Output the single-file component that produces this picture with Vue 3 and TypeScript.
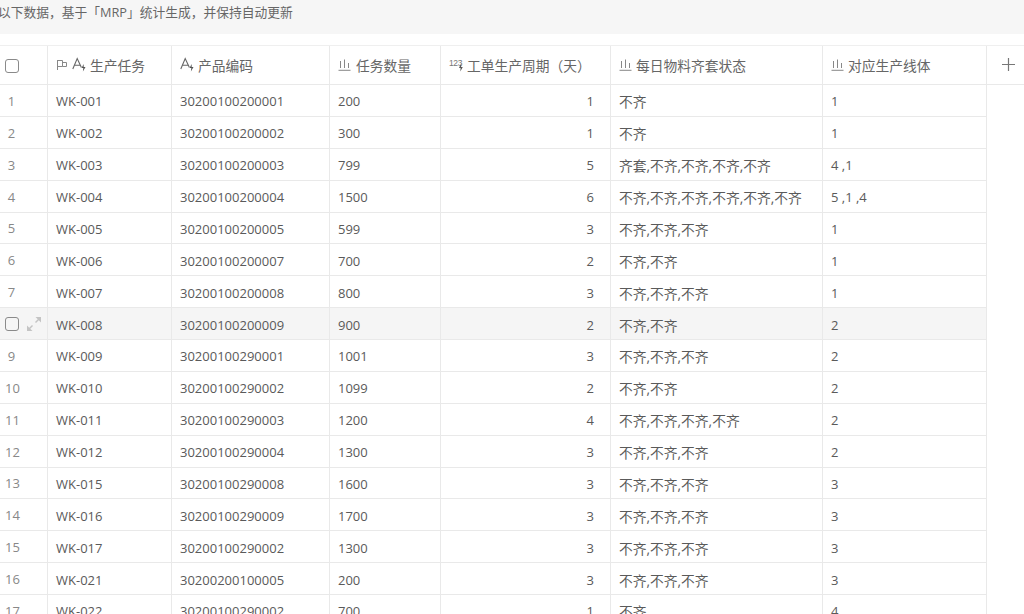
<script setup lang="ts">
type Row = {
  no: number;
  task: string;
  code: string;
  qty: string;
  days: number;
  status: string;
  line: string;
};

const raw: [string, string, string, number, string, string][] = [
  ["WK-001", "30200100200001", "200", 1, "不齐", "1"],
  ["WK-002", "30200100200002", "300", 1, "不齐", "1"],
  ["WK-003", "30200100200003", "799", 5, "齐套,不齐,不齐,不齐,不齐", "4 ,1"],
  ["WK-004", "30200100200004", "1500", 6, "不齐,不齐,不齐,不齐,不齐,不齐", "5 ,1 ,4"],
  ["WK-005", "30200100200005", "599", 3, "不齐,不齐,不齐", "1"],
  ["WK-006", "30200100200007", "700", 2, "不齐,不齐", "1"],
  ["WK-007", "30200100200008", "800", 3, "不齐,不齐,不齐", "1"],
  ["WK-008", "30200100200009", "900", 2, "不齐,不齐", "2"],
  ["WK-009", "30200100290001", "1001", 3, "不齐,不齐,不齐", "2"],
  ["WK-010", "30200100290002", "1099", 2, "不齐,不齐", "2"],
  ["WK-011", "30200100290003", "1200", 4, "不齐,不齐,不齐,不齐", "2"],
  ["WK-012", "30200100290004", "1300", 3, "不齐,不齐,不齐", "2"],
  ["WK-015", "30200100290008", "1600", 3, "不齐,不齐,不齐", "3"],
  ["WK-016", "30200100290009", "1700", 3, "不齐,不齐,不齐", "3"],
  ["WK-017", "30200100290002", "1300", 3, "不齐,不齐,不齐", "3"],
  ["WK-021", "30200200100005", "200", 3, "不齐,不齐,不齐", "3"],
  ["WK-022", "30200100290002", "700", 1, "不齐", "4"],
];

const rows: Row[] = raw.map((r, i) => ({
  no: i + 1,
  task: r[0],
  code: r[1],
  qty: r[2],
  days: r[3],
  status: r[4],
  line: r[5],
}));

const hoverNo = 8;
</script>

<template>
  <div class="page">
    <div class="notice"><span class="notice__text">以下数据，基于「MRP」统计生成，并保持自动更新</span></div>

    <div class="sheet">
      <div class="row row--head">
        <div class="cell cell--check"><span class="box"></span></div>
        <div class="cell">
          <svg class="ic" width="12" height="12" viewBox="0 0 12 12" fill="none" stroke="#888" stroke-width="1">
            <path d="M1.500 1v10M1.500 1.500h5v6h-5M6.500 3.500h4v4h-4" />
          </svg>
          <svg class="ic ic--text" width="15" height="15" viewBox="0 0 15 15" fill="none" stroke="#666" stroke-width="1.100">
            <path d="M.8 12 5.200 1.500 9.400 10.500M2.300 8.200h5.600" />
            <path d="M11.600 7 9.600 11h1.700l-.4 3.500 2.600-4.500h-1.800z" fill="#555" stroke="none" />
          </svg>
          <span>生产任务</span>
        </div>
        <div class="cell">
          <svg class="ic ic--text" width="15" height="15" viewBox="0 0 15 15" fill="none" stroke="#666" stroke-width="1.100">
            <path d="M.8 12 5.200 1.500 9.400 10.500M2.300 8.200h5.600" />
            <path d="M11.600 7 9.600 11h1.700l-.4 3.500 2.600-4.500h-1.800z" fill="#555" stroke="none" />
          </svg>
          <span>产品编码</span>
        </div>
        <div class="cell cell--bars">
          <svg class="ic" width="13" height="12" viewBox="0 0 13 12" fill="none" stroke="#888" stroke-width="1">
            <path d="M.5 11.300h12M2.500 2v7M6.500 .5v8.500M10.500 4v5" />
          </svg>
          <span>任务数量</span>
        </div>
        <div class="cell cell--count">
          <svg class="ic" width="15" height="15" viewBox="0 0 15 15" fill="none">
            <text x="0" y="9" font-size="8.500" letter-spacing="-0.4" fill="#777" font-family="Liberation Sans, sans-serif">123</text>
            <path d="M12.300 6 10 11h1.600l-.3 3.500 2.500-4.500h-1.700z" fill="#555" />
          </svg>
          <span>工单生产周期（天）</span>
        </div>
        <div class="cell">
          <svg class="ic" width="13" height="12" viewBox="0 0 13 12" fill="none" stroke="#888" stroke-width="1">
            <path d="M.5 11.300h12M2.500 2v7M6.500 .5v8.500M10.500 4v5" />
          </svg>
          <span>每日物料齐套状态</span>
        </div>
        <div class="cell">
          <svg class="ic" width="13" height="12" viewBox="0 0 13 12" fill="none" stroke="#888" stroke-width="1">
            <path d="M.5 11.300h12M2.500 2v7M6.500 .5v8.500M10.500 4v5" />
          </svg>
          <span>对应生产线体</span>
        </div>
        <div class="cell cell--add">
          <svg width="15" height="15" viewBox="0 0 15 15" stroke="#777" stroke-width="1.200">
            <path d="M7.500 1v13M1 7.500h13" />
          </svg>
        </div>
      </div>

      <div
        v-for="r in rows"
        :key="r.no"
        class="row"
        :class="{ 'row--hover': r.no === hoverNo }"
      >
        <div class="cell cell--check">
          <template v-if="r.no === hoverNo">
            <span class="box"></span>
            <svg width="16" height="16" viewBox="0 0 16 16" fill="#c4c4c4" stroke="#c4c4c4" stroke-width="1.400">
              <path d="M9.500 6.500l3.500-3.500" />
              <path d="M9.500 1h5.500v5.500z" stroke="none" />
              <path d="M6.500 9.500l-3.500 3.500" />
              <path d="M1 9.500v5.500h5.500z" stroke="none" />
            </svg>
          </template>
          <span v-else class="no">{{ r.no }}</span>
        </div>
        <div class="cell">{{ r.task }}</div>
        <div class="cell">{{ r.code }}</div>
        <div class="cell">{{ r.qty }}</div>
        <div class="cell cell--num">{{ r.days }}</div>
        <div class="cell cell--cjk">{{ r.status }}</div>
        <div class="cell">{{ r.line }}</div>
      </div>
    </div>
  </div>
</template>

<style scoped>
.page {
  width: 1024px;
  height: 614px;
  overflow: hidden;
  background: #fff;
  color: #5a5a5a;
  font-family: "Open Sans", "Noto Sans CJK SC", sans-serif;
  font-size: 13px;
}

.notice {
  height: 33.5px;
  background: #f6f6f6;
  color: #666;
  font-size: 12.75px;
  line-height: 25px;
  overflow: hidden;
  white-space: nowrap;
}

.notice__text {
  display: block;
  margin-left: -2px;
}

.sheet {
  margin-top: 11.5px;
}

.row {
  display: grid;
  grid-template-columns: 48px 124px 158px 111px 170px 212px 164px;
  height: 31.875px;
  box-sizing: border-box;
  border-bottom: 1px solid #e9e9e9;
  width: 987px;
}

.row--head {
  grid-template-columns: 48px 124px 158px 111px 170px 212px 164px 38px;
  width: 1024px;
  height: 40px;
  border-top: 1px solid #efefef;
}

.row--hover {
  background: #f5f5f5;
}

.cell {
  display: flex;
  align-items: center;
  padding: 2px 8px 0;
  border-right: 1px solid #e9e9e9;
  white-space: nowrap;
  overflow: hidden;
  min-width: 0;
}

.cell--cjk {
  font-size: 13.75px;
}

.row--head .cell {
  color: #666;
  font-size: 13.75px;
  gap: 4px;
  padding-top: 0;
  padding-bottom: 1px;
}

.row--head .cell--bars {
  gap: 5px;
}

.row--head .cell--count {
  gap: 3px;
}

.cell--check {
  padding: 1px 0 0 5px;
  gap: 7px;
}

.row--head .cell--check {
  padding: 1px 0 0 5px;
}

.cell--num {
  justify-content: flex-end;
  padding-right: 16px;
}

.row--head .cell--add {
  border-right: 0;
  justify-content: center;
  padding: 0 0 1px 5px;
}

.box {
  width: 12px;
  height: 12px;
  border: 1px solid #8a8a8a;
  border-radius: 3px;
  flex: none;
}

.no {
  width: 13px;
  text-align: center;
  color: #888;
}

.ic {
  flex: none;
}

.ic--text {
  margin-right: -1px;
}
</style>
